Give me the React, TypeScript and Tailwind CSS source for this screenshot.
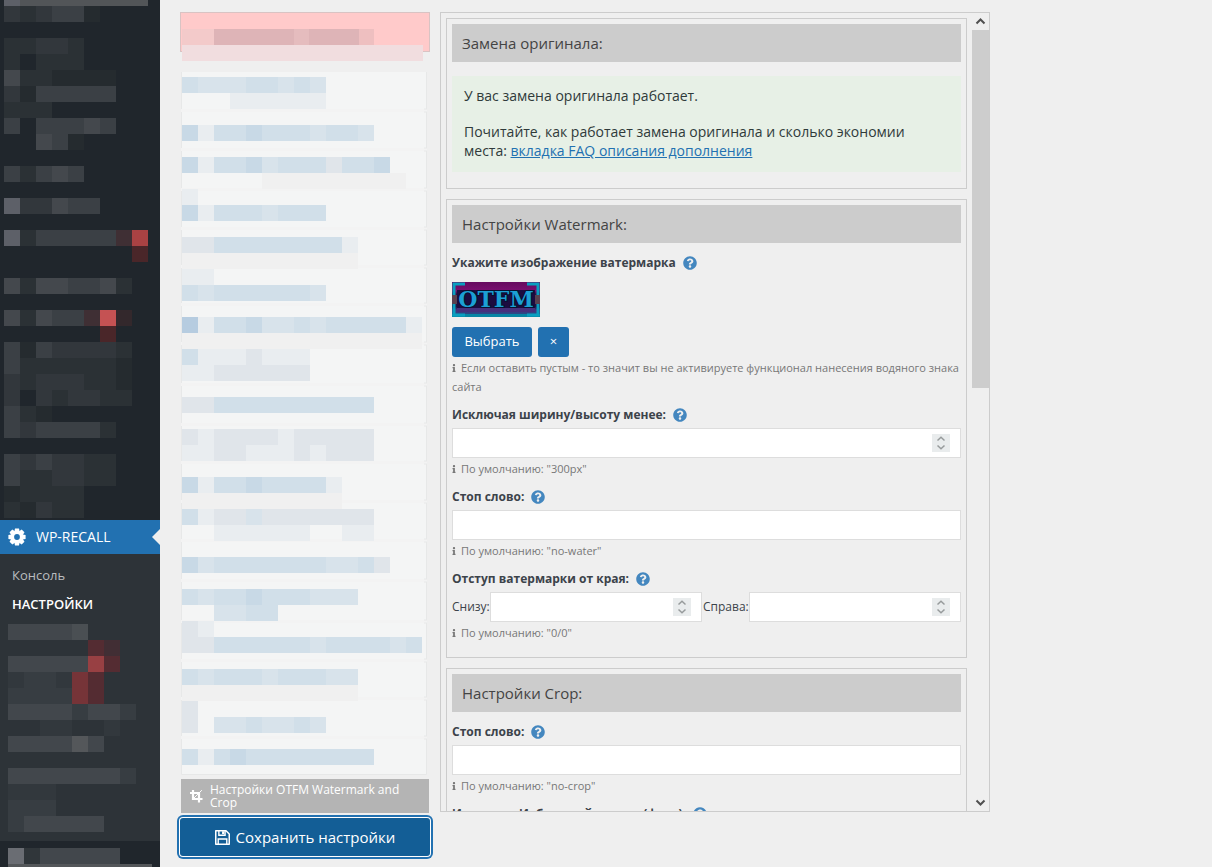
import React from "react";
import { FaQuestionCircle, FaInfo } from "react-icons/fa";

type Palette = Record<string, string>;
type TileRow = [number, string];

const darkTiles: Palette = {
  a: "#252b2f",
  b: "#2b3135",
  c: "#32373c",
  d: "#3b4045",
  e: "#44484d",
  f: "#525558",
  g: "#5d6068",
  r: "#a94243",
  s: "#c55253",
  t: "#4a2629",
  u: "#3f2f34",
  v: "#33282c",
};

const submenuTiles: Palette = {
  a: "#30363a",
  b: "#32383d",
  c: "#373d42",
  d: "#42474c",
  e: "#4a4f53",
  f: "#54575a",
  g: "#6a6d73",
  r: "#984043",
  s: "#763438",
  t: "#542c32",
  u: "#412e34",
};

const lightTiles: Palette = {
  a: "#b6cce0",
  A: "#c8d9e6",
  B: "#d1dfe9",
  C: "#d8e3eb",
  D: "#e0e5ea",
  E: "#e9edf0",
  F: "#f0f0f0",
};

const topRows: TileRow[] = [
  [-10, "gffffffff"],
  [6, "cbcdda"],
  [38, "bbccb"],
  [54, "b.bbb"],
  [70, "ebbaaaa"],
  [86, "caddddd"],
  [102, "bbb"],
  [118, "d.ddded"],
  [134, "..eda"],
  [166, "dbded"],
  [198, "gccedd"],
  [230, "gbdddddur"],
  [246, "........t"],
  [278, "ebeeddeb"],
  [310, "ebeddusv"],
  [326, "......t"],
  [342, "dadccccb"],
  [358, "dbbbbbba"],
  [374, "cbcccbba"],
  [390, "c.cbccbb"],
  [406, "dba"],
  [422, "dcddddb"],
  [454, "dcdccbb"],
  [470, "dbbccbb"],
  [486, "abbbb"],
  [502, "bacbb"],
];

const submenuRows: TileRow[] = [
  [4, "dddde"],
  [20, ".....tu"],
  [36, "dddddrt"],
  [52, "bccbst"],
  [68, "ccccst"],
  [84, "ddddcddc"],
  [100, "..bb..b"],
  [116, "ddddfd"],
  [148, "dddddddc"],
  [164, "bbb"],
  [180, "ccc"],
  [196, "cddddd"],
];

const footerRows: TileRow[] = [
  [7, "gaddddd"],
  [23, "fffffffff"],
];

const listRows: TileRow[] = [
  [65, "BCCCBBCBC"],
  [81, "...EEEEEE"],
  [113, "AEBBABBBCBBC"],
  [145, "AEBBACBBBDBBA"],
  [161, ".....FFFFFFFFF"],
  [177, "E"],
  [193, "AEBBBCBBB"],
  [225, "DDBBBBBBBBE"],
  [241, "FFFFFFFFFFF"],
  [257, "EE"],
  [273, "BCBBBBBBC"],
  [305, "aEBBACCBCBBBBBE"],
  [321, "FFFFFFFFFFFFFFF"],
  [337, "BEEEDEEE"],
  [353, "EEDDDDDD"],
  [385, "DDBBBBBBBBBB"],
  [417, "DEDDDDEDDDDD"],
  [433, "EEDDEEEDEDDD"],
  [465, "AEBBABBBBE"],
  [481, "FFFFFFFFFF"],
  [497, "BEDDCDDDDDDD"],
  [513, "..EEEEEE..EE"],
  [545, "ACBBBBBBBCCBD"],
  [577, "BCBBABBBCCC"],
  [593, "..CCBB"],
  [609, "DE"],
  [625, "DDBBBBBBCBBBBCB"],
  [657, "BCBBBCBBBCC"],
  [673, "FFFFFFFFFFF"],
  [689, "D"],
  [705, "D.CCBCCBC"],
  [737, "BEBABBBBBBBB"],
];

const dividers = [98, 137, 177, 216, 254, 292, 331, 372, 412, 450, 489, 528, 568, 609, 648, 686, 725];

function Tiles({ rows, palette, left }: { rows: TileRow[]; palette: Palette; left: number }) {
  return (
    <>
      {rows.map(([y, cells]) =>
        cells
          .split("")
          .map((cell, i) =>
            cell === "." ? null : (
              <rect key={`${y}-${i}`} x={left + i * 16} y={y} width="16" height="16" fill={palette[cell]} />
            ),
          ),
      )}
    </>
  );
}

function Gear() {
  return (
    <svg viewBox="0 0 18 18" className="size-[18px]" aria-hidden="true">
      <g fill="#fff">
        {[0, 45, 90, 135].map((angle) => (
          <path key={angle} d="M7 0.4h4l.6 3v11.2l-.6 3H7l-.6-3V3.4z" transform={`rotate(${angle} 9 9)`} />
        ))}
      </g>
      <circle cx="9" cy="9" r="2.9" fill="#2271b1" />
    </svg>
  );
}

function CropIcon() {
  return (
    <svg viewBox="0 0 14 14" className="size-[14px] shrink-0" fill="none" aria-hidden="true">
      <path d="M4 1v9h9.5M1 4h9v9.5" stroke="#fff" strokeWidth="2.2" />
      <path d="M4 10L12.8 1.2" stroke="#fff" strokeWidth="1" />
    </svg>
  );
}

function Floppy() {
  return (
    <svg viewBox="0 0 14 14" className="size-[15px]" fill="none" stroke="#fff" aria-hidden="true">
      <path d="M.7.7h9.6l3 3v9.6H.7z" strokeWidth="1.4" strokeLinejoin="round" />
      <path d="M3.6.7v4.2h5.8V.7M3 13.3V8.4h8v4.9" strokeWidth="1.3" />
      <path d="M7.6 1.2v2.6" strokeWidth="2" />
    </svg>
  );
}

function Logo() {
  return (
    <svg viewBox="0 0 88 35" className="mt-1.5 block h-[35px] w-[88px]" role="img" aria-label="OTFM">
      <defs>
        <linearGradient id="wash" x1="0" y1="0" x2="0" y2="1">
          <stop offset="0" stopColor="#650a5e" />
          <stop offset="0.25" stopColor="#7a0f70" />
          <stop offset="0.35" stopColor="#2a1045" />
          <stop offset="0.7" stopColor="#1e1545" />
          <stop offset="0.8" stopColor="#43307c" />
          <stop offset="1" stopColor="#17608f" />
        </linearGradient>
      </defs>
      <rect width="88" height="35" fill="url(#wash)" />
      <path d="M0 13h5v9H0zM83 13h5v9h-5z" fill="#59404f" />
      <path d="M5 8h78v18H5z" fill="#1c0c40" />
      <path d="M5 26h78v4H5z" fill="#46307c" />
      <path d="M0 33.5h88" stroke="#0786a4" strokeWidth="3" />
      <path d="M2 13V2h11M75 2h11v11M2 22v11h11M75 33h11V22" fill="none" stroke="#0a9fc0" strokeWidth="3" />
      <text
        x="44"
        y="25"
        textAnchor="middle"
        fontSize="22"
        fontWeight="700"
        fill="#1c9fd4"
        stroke="#071030"
        strokeWidth="2"
        paintOrder="stroke"
        className="font-['DejaVu_Serif',serif]"
      >
        OTFM
      </text>
    </svg>
  );
}

function Help() {
  return (
    <button type="button" aria-label="Справка" className="text-[#4487bf]">
      <FaQuestionCircle className="size-[14px]" />
    </button>
  );
}

function FieldLabel({ id, children }: { id?: string; children: React.ReactNode }) {
  return (
    <div className="flex h-[26px] items-center gap-[7px]">
      <label htmlFor={id} className="text-xs font-bold whitespace-nowrap text-[#3c434a]">
        {children}
      </label>
      <Help />
    </div>
  );
}

function Note({ children }: { children: React.ReactNode }) {
  return (
    <p className="-mr-1 mb-1 pt-px pb-[2px] text-[11px] leading-[19px] text-[#777]">
      <FaInfo className="mr-[5px] inline h-2 w-1 align-baseline" />
      {children}
    </p>
  );
}

const inputClass =
  "block h-[30px] w-full min-w-0 border border-[#ddd] bg-white px-2 text-sm text-[#2c3338] outline-none [appearance:textfield]";

function NumberInput({ id }: { id: string }) {
  return (
    <div className="relative min-w-0 flex-1">
      <input id={id} type="number" className={inputClass} />
      <svg viewBox="0 0 18 18" className="absolute top-1.5 right-[11px] size-[18px]" aria-hidden="true">
        <rect width="18" height="18" fill="#e9eced" />
        <path d="M5.5 6.5L9 3.2l3.5 3.3M5.5 11.5L9 14.8l3.5-3.3" fill="none" stroke="#979b9c" strokeWidth="1.5" />
      </svg>
    </div>
  );
}

function Section({ title, children }: { title: string; children: React.ReactNode }) {
  return (
    <section className="mb-[10px] border border-[#ccc] p-[5px] pb-[9px]">
      <h2 className="mb-[7px] flex h-[38px] items-center bg-[#ccc] px-[10px] text-[15px] text-[#444]">{title}</h2>
      {children}
    </section>
  );
}

function Sidebar() {
  return (
    <nav className="w-40 shrink-0 bg-[#20262c]">
      <svg viewBox="0 0 160 520" className="block w-40" aria-hidden="true">
        <Tiles rows={topRows} palette={darkTiles} left={4} />
      </svg>
      <a href="#wp-recall" className="relative flex h-[34px] items-center gap-[10px] bg-[#2271b1] pl-2 text-sm text-white">
        <Gear />
        WP-RECALL
        <svg viewBox="0 0 8 16" className="absolute right-0 h-4 w-2" aria-hidden="true">
          <path d="M8 0v16L0 8z" fill="#efefef" />
        </svg>
      </a>
      <div className="bg-[#2d3338] pt-[7px]">
        <a href="#console" className="flex h-[29px] items-center px-3 text-[13px] text-[#b9bcbf]">
          Консоль
        </a>
        <a href="#settings" className="flex h-[29px] items-center px-3 text-[13px] font-semibold text-white">
          НАСТРОЙКИ
        </a>
        <svg viewBox="0 0 160 221" className="mt-px block w-40" aria-hidden="true">
          <Tiles rows={submenuRows} palette={submenuTiles} left={8} />
        </svg>
      </div>
      <svg viewBox="0 0 160 26" className="block w-40" aria-hidden="true">
        <Tiles rows={footerRows} palette={submenuTiles} left={8} />
      </svg>
    </nav>
  );
}

function SectionList() {
  return (
    <div className="w-[250px] shrink-0">
      <svg viewBox="0 0 250 767" className="block w-full" aria-hidden="true">
        <rect x="0.5" y="0.5" width="249" height="39" fill="#ffcaca" stroke="#d9c3c3" />
        <rect x="2" y="17" width="32" height="16" fill="#f3caca" />
        <rect x="34" y="17" width="145" height="16" fill="#deb4b7" />
        <rect x="114" y="17" width="15" height="16" fill="#e5bcbe" />
        <rect x="179" y="17" width="15" height="16" fill="#eebfc0" />
        <rect x="2" y="33" width="241" height="16" fill="#f1dddf" />
        <rect x="1.5" y="60" width="245" height="702" fill="#f4f5f5" />
        <path d="M1.5 60v702.5h245V60" fill="none" stroke="#e7e8e8" />
        {dividers.map((y) => (
          <g key={y}>
            <rect x="1" y={y - 1} width="246" height="3" fill="#f3f3f3" />
            <path d={`M244 ${y - 1}h3M244 ${y + 2}h3`} stroke="#e7e8e8" />
          </g>
        ))}
        <Tiles rows={listRows} palette={lightTiles} left={2} />
      </svg>
      <a
        href="#otfm"
        className="mx-px flex h-[34px] items-center gap-[7px] bg-[#b4b4b4] pr-4 pl-2 text-xs leading-[13px] text-white"
      >
        <CropIcon />
        Настройки OTFM Watermark and Crop
      </a>
      <button
        type="button"
        className="mt-[5px] flex h-[38px] w-full items-center justify-center gap-1.5 rounded-[3px] bg-[#135e96] text-[15px] text-white shadow-[0_0_0_1px_#fff,0_0_0_3px_#2271b1]"
      >
        <Floppy />
        Сохранить настройки
      </button>
    </div>
  );
}

function Scrollbar() {
  return (
    <div className="flex w-[17px] shrink-0 flex-col items-center" aria-hidden="true">
      <svg viewBox="0 0 17 17" className="size-[17px] shrink-0" fill="none" stroke="#505050" strokeWidth="2">
        <path d="M4.5 10.5l4-4 4 4" />
      </svg>
      <div className="h-[358px] w-full bg-[#cdcdcd]" />
      <svg viewBox="0 0 17 17" className="mt-auto size-[17px] shrink-0" fill="none" stroke="#505050" strokeWidth="2">
        <path d="M4.5 6.5l4 4 4-4" />
      </svg>
    </div>
  );
}

export default function App() {
  return (
    <div className="flex min-h-screen bg-[#efefef] font-['Open_Sans','Noto_Sans',sans-serif] text-[#3c434a]">
      <Sidebar />
      <main className="flex min-w-0 flex-1 items-start gap-[10px] pt-3 pl-5">
        <SectionList />
        <div className="flex h-[800px] max-w-[550px] min-w-0 flex-1 overflow-hidden border border-[#ccc]">
          <form className="min-w-0 flex-1 p-[5px]">
            <Section title="Замена оригинала:">
              <div className="mt-[14px] mb-[7px] bg-[#e7f0e6] px-3 pt-[10px] pb-3 text-sm leading-[19px] text-[#2f3a3a]">
                <p>У вас замена оригинала работает.</p>
                <p className="mt-[17px]">
                  Почитайте, как работает замена оригинала и сколько экономии места:{" "}
                  <a href="#faq" className="text-[#2271b1] underline">
                    вкладка FAQ описания дополнения
                  </a>
                </p>
              </div>
            </Section>
            <Section title="Настройки Watermark:">
              <FieldLabel id="watermark">Укажите изображение ватермарка</FieldLabel>
              <Logo />
              <div className="mt-[10px] flex gap-1.5">
                <button id="watermark" type="button" className="h-[30px] w-20 rounded-[3px] bg-[#2271b1] text-[13px] text-white">
                  Выбрать
                </button>
                <button type="button" className="h-[30px] w-[31px] rounded-[3px] bg-[#2271b1] text-[13px] text-white">
                  ×
                </button>
              </div>
              <Note>Если оставить пустым - то значит вы не активируете функционал нанесения водяного знака сайта</Note>
              <FieldLabel id="min-size">Исключая ширину/высоту менее:</FieldLabel>
              <NumberInput id="min-size" />
              <Note>По умолчанию: "300px"</Note>
              <FieldLabel id="stop-word">Стоп слово:</FieldLabel>
              <input id="stop-word" type="text" className={inputClass} />
              <Note>По умолчанию: "no-water"</Note>
              <FieldLabel id="offset-bottom">Отступ ватермарки от края:</FieldLabel>
              <div className="flex items-center text-xs">
                <label htmlFor="offset-bottom">Снизу:</label>
                <NumberInput id="offset-bottom" />
                <label htmlFor="offset-right" className="pl-px">
                  Справа:
                </label>
                <NumberInput id="offset-right" />
              </div>
              <Note>По умолчанию: "0/0"</Note>
            </Section>
            <Section title="Настройки Crop:">
              <FieldLabel id="crop-stop-word">Стоп слово:</FieldLabel>
              <input id="crop-stop-word" type="text" className={inputClass} />
              <Note>По умолчанию: "no-crop"</Note>
              <FieldLabel id="crop-size">Исключая Избранный раздел (фото):</FieldLabel>
              <NumberInput id="crop-size" />
            </Section>
          </form>
          <Scrollbar />
        </div>
      </main>
    </div>
  );
}
